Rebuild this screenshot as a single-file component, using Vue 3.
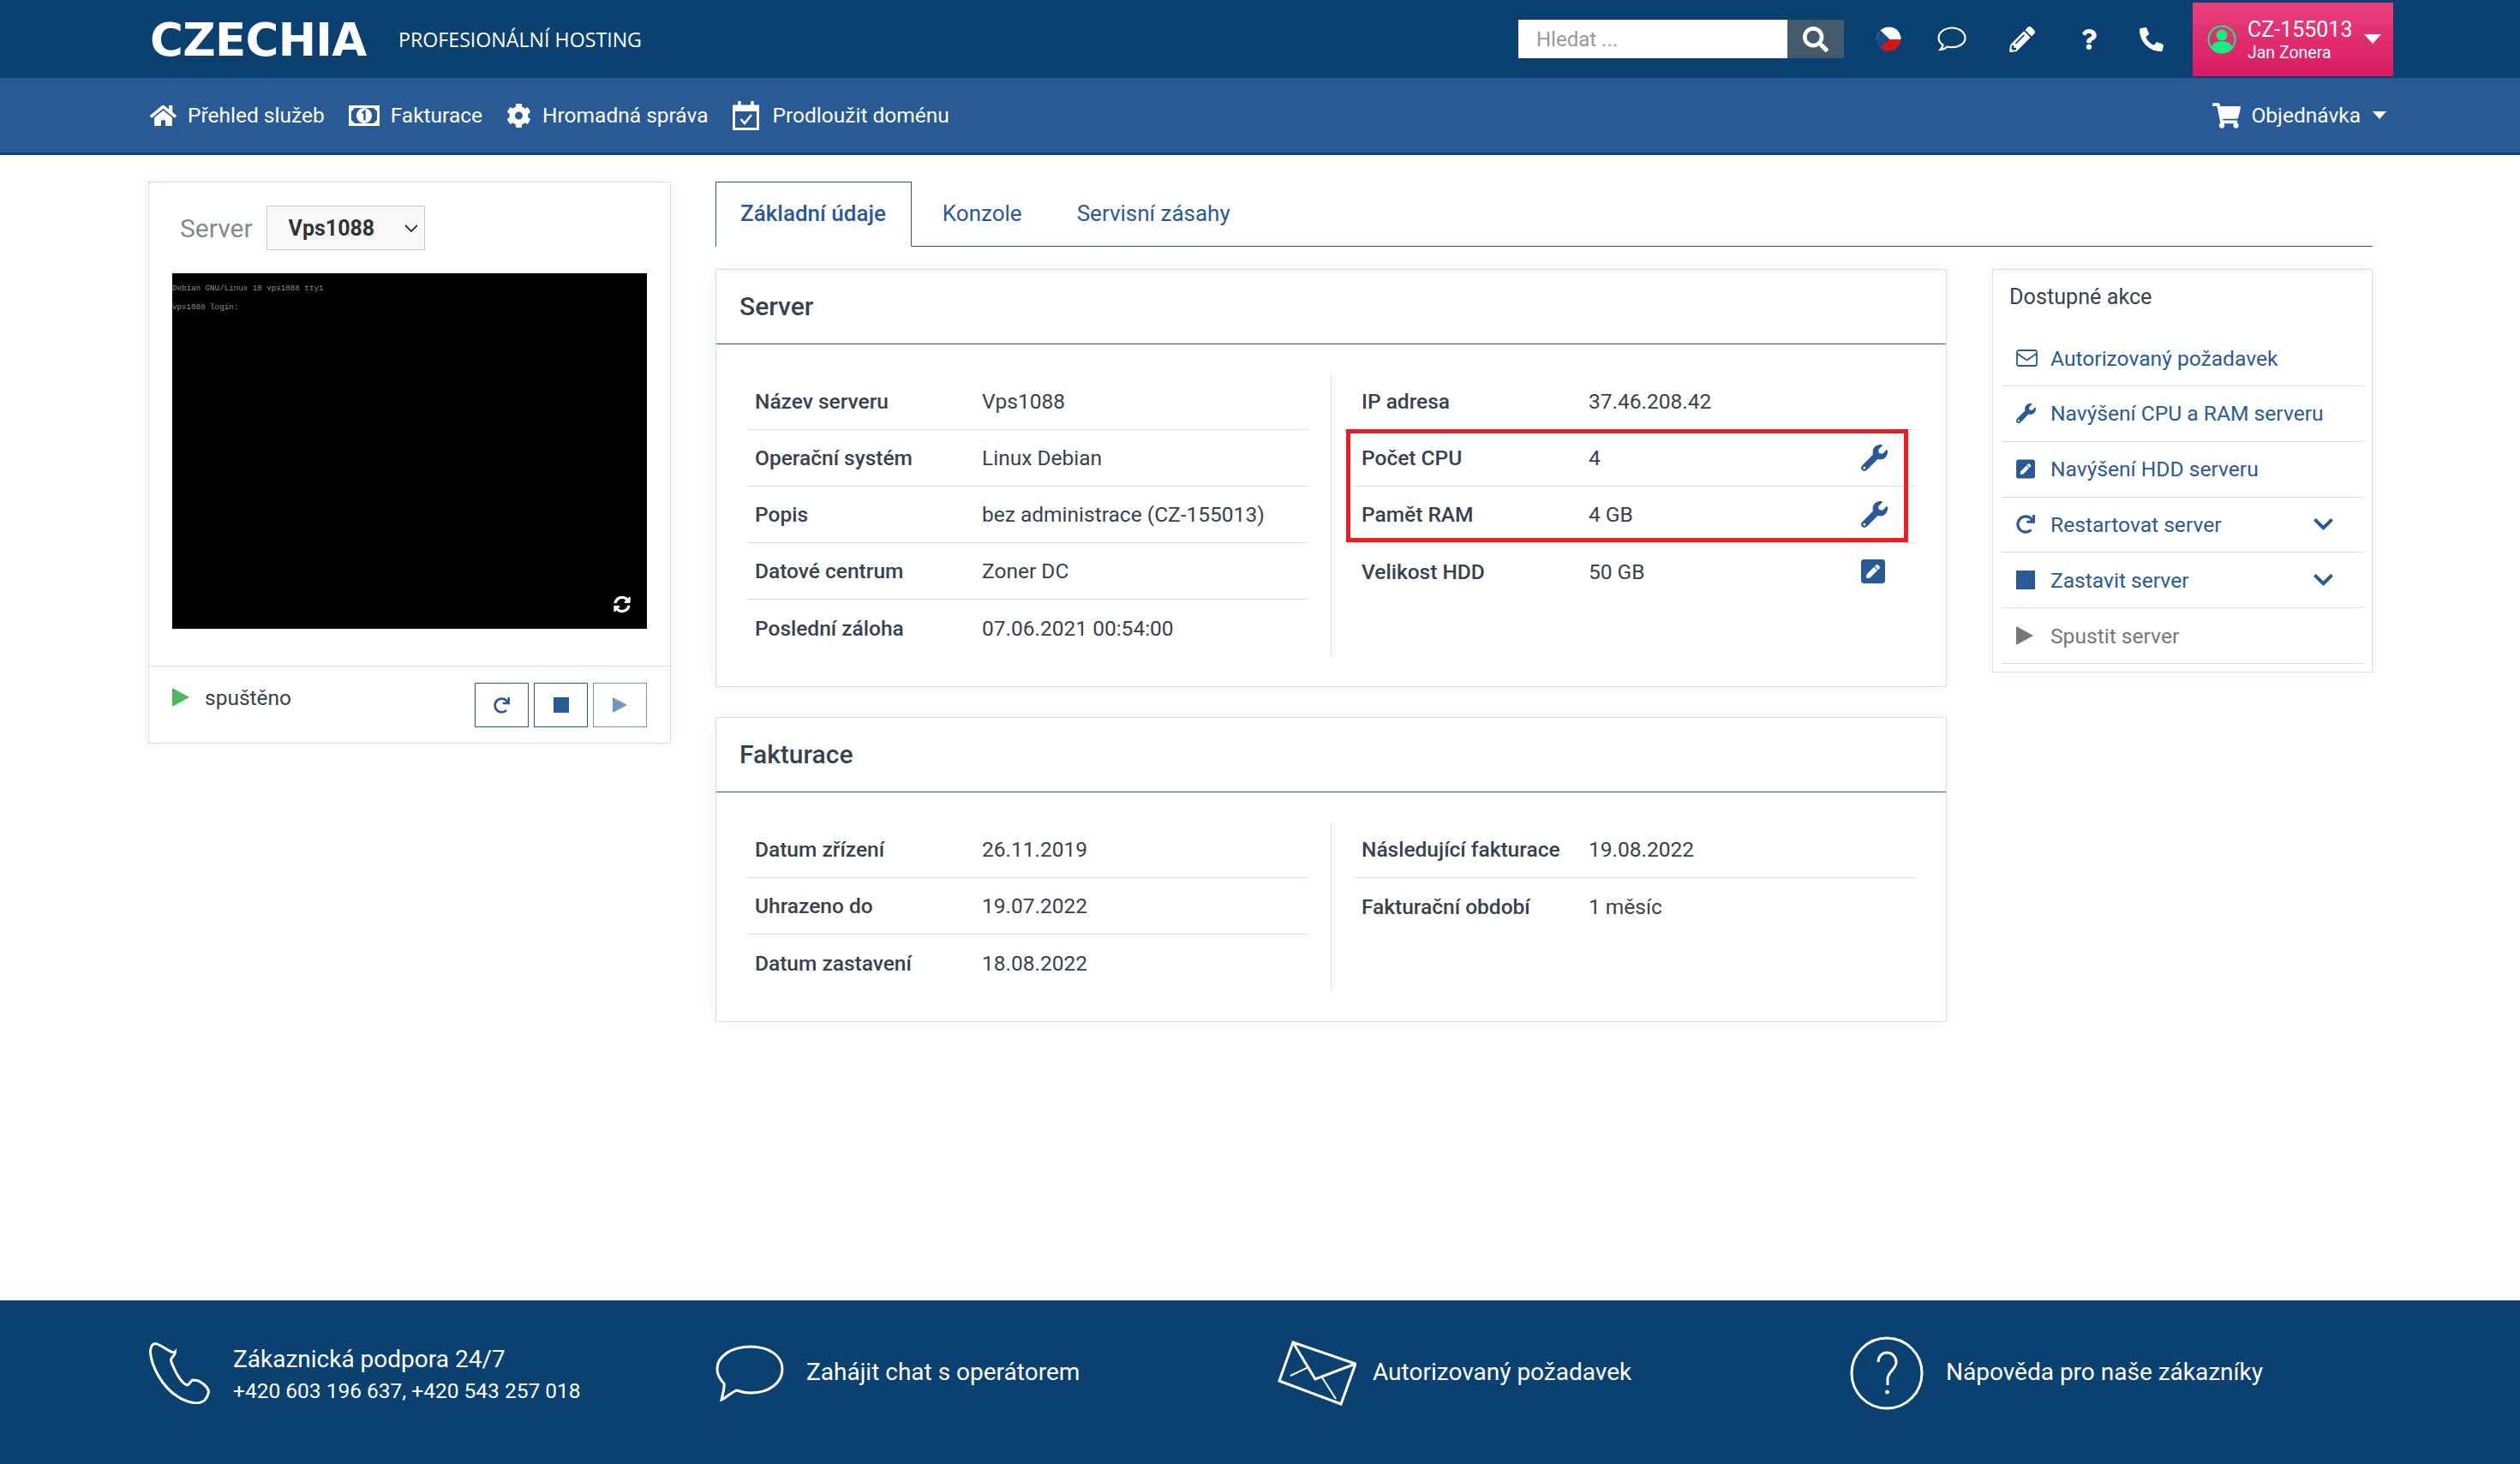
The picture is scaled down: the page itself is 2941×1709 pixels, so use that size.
<template>
  <div class="page">
    <header class="topbar">
      <div class="brand">CZECHIA</div>
      <div class="tagline">PROFESIONÁLNÍ HOSTING</div>
      <div class="search">
        <input type="text" placeholder="Hledat ..." />
        <button class="search-btn">
          <svg width="30" height="30" viewBox="0 0 512 512"><path fill="#fff" :d="icons.search" /></svg>
        </button>
      </div>
      <div class="top-icons">
        <svg class="flag" width="29" height="29" viewBox="0 0 29 29">
          <defs><clipPath id="flagclip"><circle cx="14.5" cy="14.5" r="14" /></clipPath></defs>
          <g clip-path="url(#flagclip)">
            <rect width="29" height="15" fill="#fff" />
            <rect y="15" width="29" height="14" fill="#d7141a" />
            <path d="M0 0L15 14.5L0 29Z" fill="#1c4a85" />
          </g>
        </svg>
        <svg class="t-chat" width="34" height="29" viewBox="0 0 34 29"><path fill="none" stroke="#fff" stroke-width="2.200" d="M17.500 1.500C8.800 1.500 1.500 6.500 1.500 13c0 3.500 2 6.500 5 8.500-.3 2-1.500 4-3 5.500 3 0 6-1.500 8-3.500 2 .5 4 .7 6 .7 8.700 0 15-5 15-11S26 1.500 17.500 1.500z" /></svg>
        <svg class="t-pen" width="30" height="30" viewBox="0 0 512 512"><path fill="#fff" :d="icons.pencil" /></svg>
        <svg class="t-help" width="18" height="26" viewBox="0 0 384 512"><path fill="#fff" :d="icons.question" /></svg>
        <svg class="t-phone" width="28" height="28" viewBox="0 0 512 512"><path fill="#fff" transform="translate(512 0) scale(-1 1)" :d="icons.phone" /></svg>
      </div>
      <div class="account">
        <svg class="avatar" width="34" height="34" viewBox="0 0 34 34">
          <circle cx="17" cy="17" r="15.5" fill="none" stroke="#12ef80" stroke-width="2" />
          <circle cx="17" cy="12" r="6.5" fill="#12ef80" />
          <path d="M4.500 26c2-5 7-7 12.500-7s10.500 2 12.500 7a15 15 0 0 1-25 0z" fill="#12ef80" />
        </svg>
        <div class="acc-text">
          <div class="acc-id">CZ-155013</div>
          <div class="acc-name">Jan Zonera</div>
        </div>
        <span class="caret big"></span>
      </div>
    </header>

    <nav class="navbar">
      <a class="nav-item">
        <svg width="31" height="28" viewBox="0 0 576 512"><path fill="#fff" :d="icons.home" /></svg>
        Přehled služeb
      </a>
      <a class="nav-item">
        <svg width="36" height="24" viewBox="0 0 36 24">
          <path fill-rule="evenodd" fill="#fff" d="M0 0h36v24H0zM7 3L3 7v10l4 4h22l4-4V7l-4-4z" />
          <circle cx="18" cy="12" r="9" fill="#fff" />
          <path d="M15.500 9l3-2v10.500" fill="none" stroke="#2a5a96" stroke-width="2.400" />
        </svg>
        Fakturace
      </a>
      <a class="nav-item">
        <svg width="29" height="30" viewBox="0 0 512 512"><path fill="#fff" :d="icons.cog" /></svg>
        Hromadná správa
      </a>
      <a class="nav-item cal">
        <svg width="31" height="34" viewBox="0 0 31 34">
          <path d="M1.500 6h28v26.500h-28z" fill="none" stroke="#fff" stroke-width="3" />
          <rect x="1" y="5" width="29" height="7" fill="#fff" />
          <path d="M8 1v7M23 1v7" stroke="#fff" stroke-width="3.500" stroke-linecap="round" />
          <path d="M9.500 21l4.500 5 8-10" fill="none" stroke="#fff" stroke-width="2.500" />
        </svg>
        Prodloužit doménu
      </a>
      <a class="nav-item order">
        <svg width="33" height="30" viewBox="0 0 576 512"><path fill="#fff" :d="icons.cart" /></svg>
        Objednávka
        <span class="caret"></span>
      </a>
    </nav>

    <main class="content">
      <aside class="server-box">
        <div class="server-top">
          <label class="server-label">Server</label>
          <div class="select-wrap">
            <select class="server-select"><option>Vps1088</option></select>
            <svg class="select-arrow" width="16" height="10" viewBox="0 0 16 10"><path d="M1 1l7 7 7-7" fill="none" stroke="#333" stroke-width="1.800" /></svg>
          </div>
        </div>
        <div class="screen">
          <div class="screen-line">Debian GNU/Linux 10 vps1088 tty1</div>
          <div class="screen-line second">vps1088 login:</div>
          <svg class="screen-sync" width="20" height="21" viewBox="0 0 512 512"><path fill="#fff" :d="icons.sync" /></svg>
        </div>
        <div class="server-status">
          <div class="state">
            <svg width="20" height="22" viewBox="0 0 20 22"><path d="M0 0L20 11L0 22Z" fill="#4cb85c" /></svg>
            <span>spuštěno</span>
          </div>
          <div class="controls">
            <button class="ctl">
              <svg width="19" height="19" viewBox="0 0 512 512"><path fill="#2a5a96" :d="icons.redo" /></svg>
            </button>
            <button class="ctl">
              <span class="stop"></span>
            </button>
            <button class="ctl off">
              <svg width="17" height="18" viewBox="0 0 17 18"><path d="M0 0L17 9L0 18Z" fill="#7396c0" /></svg>
            </button>
          </div>
        </div>
      </aside>

      <section class="detail">
        <div class="tabs">
          <a v-for="(t, i) in tabs" :key="t" class="tab" :class="{ active: i === 0 }">{{ t }}</a>
        </div>
        <div class="detail-body">
          <div class="cards">
            <div v-for="card in cards" :key="card.title" class="card">
              <h2 class="card-title">{{ card.title }}</h2>
              <div class="cols">
                <div v-for="(col, ci) in card.cols" :key="ci" class="col">
                  <div v-for="r in col" :key="r.label" class="row">
                    <span class="r-label">{{ r.label }}</span>
                    <span class="r-value">{{ r.value }}</span>
                    <svg v-if="r.icon === 'wrench'" class="r-icon" width="31" height="31" viewBox="0 0 512 512"><path fill="#2a5a96" :d="icons.wrench" /></svg>
                    <svg v-if="r.icon === 'edit'" class="r-icon edit" width="28" height="32" viewBox="0 0 448 512"><path fill="#2a5a96" :d="icons.edit" /></svg>
                  </div>
                  <span v-if="card.mark && ci === 1" class="mark"></span>
                </div>
              </div>
            </div>
          </div>

          <div class="actions">
            <div class="actions-title">Dostupné akce</div>
            <a v-for="a in actions" :key="a.text" class="action" :class="{ disabled: a.disabled }">
              <span class="a-icon">
                <svg v-if="a.icon === 'mail'" width="25" height="20" viewBox="0 0 25 20">
                  <rect x="1" y="1" width="23" height="18" rx="2" fill="none" stroke="#2a5a96" stroke-width="1.800" />
                  <path d="M1.500 5l11 7.500 11-7.500" fill="none" stroke="#2a5a96" stroke-width="1.800" />
                </svg>
                <svg v-else-if="a.icon === 'wrench'" width="23" height="23" viewBox="0 0 512 512"><path fill="#2a5a96" :d="icons.wrench" /></svg>
                <svg v-else-if="a.icon === 'edit'" width="22" height="25" viewBox="0 0 448 512"><path fill="#2a5a96" :d="icons.edit" /></svg>
                <svg v-else-if="a.icon === 'redo'" width="22" height="22" viewBox="0 0 512 512"><path fill="#2a5a96" :d="icons.redo" /></svg>
                <span v-else-if="a.icon === 'stop'" class="a-stop"></span>
                <svg v-else width="20" height="22" viewBox="0 0 20 22"><path d="M0 0L20 11L0 22Z" fill="#777" /></svg>
              </span>
              <span>{{ a.text }}</span>
              <svg v-if="a.more" class="chev" width="23" height="26" viewBox="0 0 448 512"><path fill="#2a5a96" :d="icons.chevron" /></svg>
            </a>
          </div>
        </div>
      </section>
    </main>

    <footer class="footer">
      <div class="f-item f-phone">
        <svg width="71" height="72" viewBox="0 0 71 72" fill="none" stroke="#fff" stroke-width="3">
          <path d="M7 1.500C3 2 1.500 7 1.500 12 3 28 15 52 33 63c8 6 20 9 26 7.500 5-1 9-6 10.500-12.500 0-4-5-9-10-12-3-2-6-2-9-2-3 2-3 5-6 6-6-2-12-12-15-19-2-4-4-8-4-11 2-4 5-5 5-9C27 15 13 1 7 1.500z" />
        </svg>
        <div class="f-text">
          <div>Zákaznická podpora 24/7</div>
          <div class="f-sub">+420 603 196 637, +420 543 257 018</div>
        </div>
      </div>
      <div class="f-item f-chat">
        <svg width="80" height="66" viewBox="0 0 80 66" fill="none" stroke="#fff" stroke-width="3">
          <path d="M41 2C19 2 2 13 2 28c0 8 4 13 8 17 1 5-2 14-3 19 5-2 15-11 18-11 5 2 11 3 16 3 22 0 37-12 37-28C78 13 63 2 41 2z" />
        </svg>
        <div class="f-text">Zahájit chat s operátorem</div>
      </div>
      <div class="f-item f-mail">
        <svg width="92" height="76" viewBox="0 0 92 76" fill="none" stroke="#fff" stroke-width="3">
          <path d="M18 2L91 27 74 74 2 47z" />
          <path d="M18 2l26 43 47-18" />
          <path d="M36 31L15 41M52 43l16 25" stroke-width="2" />
        </svg>
        <div class="f-text">Autorizovaný požadavek</div>
      </div>
      <div class="f-item f-help">
        <svg width="86" height="86" viewBox="0 0 86 86" fill="none" stroke="#fff" stroke-width="3">
          <circle cx="43" cy="43" r="41" />
          <path d="M33 30c0-7 5-11 10.500-11S54 24 54 30c0 8-9 11-10 19v8" />
          <circle cx="43.500" cy="65" r="2" fill="#fff" stroke-width="1" />
        </svg>
        <div class="f-text">Nápověda pro naše zákazníky</div>
      </div>
    </footer>
  </div>
</template>

<script setup>
const icons = {
  search: 'M505 442.7L405.3 343c-4.5-4.5-10.6-7-17-7H372c27.6-35.3 44-79.7 44-128C416 93.1 322.9 0 208 0S0 93.1 0 208s93.1 208 208 208c48.3 0 92.7-16.4 128-44v16.3c0 6.4 2.5 12.5 7 17l99.7 99.7c9.4 9.4 24.6 9.4 33.9 0l28.3-28.3c9.4-9.4 9.4-24.6.1-34zM208 336c-70.7 0-128-57.2-128-128 0-70.7 57.2-128 128-128 70.7 0 128 57.2 128 128 0 70.7-57.2 128-128 128z',
  pencil: 'M497.9 142.1l-46.1 46.1c-4.7 4.7-12.3 4.7-17 0l-111-111c-4.7-4.7-4.7-12.3 0-17l46.1-46.1c18.7-18.7 49.1-18.7 67.9 0l60.1 60.1c18.8 18.7 18.8 49.1 0 67.9zM284.2 99.8L21.6 362.4.4 483.9c-2.9 16.4 11.4 30.6 27.8 27.8l121.5-21.3 262.6-262.6c4.7-4.7 4.7-12.3 0-17l-111-111c-4.8-4.7-12.4-4.7-17.1 0zM124.1 339.9c-5.5-5.5-5.5-14.3 0-19.8l154-154c5.5-5.5 14.3-5.5 19.8 0s5.5 14.3 0 19.8l-154 154c-5.5 5.5-14.3 5.5-19.8 0zM88 424h48v36.3l-64.5 11.3-31.1-31.1L51.7 376H88v48z',
  question: 'M202.021 0C122.202 0 70.503 32.703 29.914 91.026c-7.363 10.58-5.093 25.086 5.178 32.874l43.138 32.709c10.373 7.865 25.132 6.026 33.253-4.148 25.049-31.381 43.63-49.449 82.757-49.449 30.764 0 68.816 19.799 68.816 49.631 0 22.552-18.617 34.134-48.993 51.164-35.423 19.86-82.299 44.576-82.299 106.405V320c0 13.255 10.745 24 24 24h72.471c13.255 0 24-10.745 24-24v-5.773c0-42.86 125.268-44.645 125.268-160.627C377.504 66.256 286.902 0 202.021 0zM192 373.459c-38.196 0-69.271 31.075-69.271 69.271 0 38.195 31.075 69.27 69.271 69.27s69.271-31.075 69.271-69.271-31.075-69.27-69.271-69.27z',
  phone: 'M493.4 24.6l-104-24c-11.3-2.6-22.9 3.3-27.5 13.9l-48 112c-4.2 9.8-1.4 21.3 6.9 28l60.6 49.6c-36 76.7-98.9 140.5-177.2 177.2l-49.6-60.6c-6.8-8.3-18.2-11.1-28-6.9l-112 48C3.9 366.5-2 378.1.6 389.4l24 104C27.1 504.2 36.7 512 48 512c256.1 0 464-207.5 464-464 0-11.2-7.7-20.9-18.6-23.4z',
  home: 'M280.37 148.26L96 300.11V464a16 16 0 0 0 16 16l112.06-.29a16 16 0 0 0 15.92-16V368a16 16 0 0 1 16-16h64a16 16 0 0 1 16 16v95.64a16 16 0 0 0 16 16.05L464 480a16 16 0 0 0 16-16V300L295.67 148.26a12.19 12.19 0 0 0-15.3 0zM571.6 251.47L488 182.56V44.05a12 12 0 0 0-12-12h-56a12 12 0 0 0-12 12v72.61L318.47 43a48 48 0 0 0-61 0L4.34 251.47a12 12 0 0 0-1.6 16.9l25.5 31A12 12 0 0 0 45.15 301l235.22-193.74a12.19 12.19 0 0 1 15.3 0L530.9 301a12 12 0 0 0 16.9-1.6l25.5-31a12 12 0 0 0-1.7-16.93z',
  cog: 'M487.4 315.7l-42.6-24.6c4.3-23.2 4.3-47 0-70.2l42.6-24.6c4.9-2.8 7.1-8.6 5.5-14-11.1-35.6-30-67.8-54.7-94.6-3.8-4.1-10-5.1-14.8-2.3L380.8 110c-17.9-15.4-38.5-27.3-60.8-35.1V25.8c0-5.6-3.9-10.5-9.4-11.7-36.7-8.2-74.3-7.8-109.2 0-5.5 1.2-9.4 6.1-9.4 11.7V75c-22.2 7.9-42.8 19.8-60.8 35.1L88.7 85.5c-4.9-2.8-11-1.9-14.8 2.3-24.7 26.7-43.6 58.9-54.7 94.6-1.7 5.4.6 11.2 5.5 14L67.3 221c-4.3 23.2-4.3 47 0 70.2l-42.6 24.6c-4.9 2.8-7.1 8.6-5.5 14 11.1 35.6 30 67.8 54.7 94.6 3.8 4.1 10 5.1 14.8 2.3l42.6-24.6c17.9 15.4 38.5 27.3 60.8 35.1v49.2c0 5.6 3.9 10.5 9.4 11.7 36.7 8.2 74.3 7.8 109.2 0 5.5-1.2 9.4-6.1 9.4-11.7v-49.2c22.2-7.9 42.8-19.8 60.8-35.1l42.6 24.6c4.9 2.8 11 1.9 14.8-2.3 24.7-26.7 43.6-58.9 54.7-94.6 1.500-5.500-.7-11.300-5.600-14.100zM256 336c-44.100 0-80-35.900-80-80s35.900-80 80-80 80 35.900 80 80-35.900 80-80 80z',
  cart: 'M528.12 301.319l47.273-208C578.806 78.301 567.391 64 551.99 64H159.208l-9.166-44.81C147.758 8.021 137.93 0 126.529 0H24C10.745 0 0 10.745 0 24v16c0 13.255 10.745 24 24 24h69.883l70.248 343.435C147.325 417.1 136 435.222 136 456c0 30.928 25.072 56 56 56s56-25.072 56-56c0-15.674-6.447-29.835-16.824-40h209.647C430.447 426.165 424 440.326 424 456c0 30.928 25.072 56 56 56s56-25.072 56-56c0-22.172-12.888-41.332-31.579-50.405l5.517-24.276c3.413-15.018-8.002-29.319-23.403-29.319H218.117l-6.545-32h293.145c11.206 0 20.92-7.754 23.403-18.681z',
  sync: 'M370.72 133.28C339.458 104.008 298.888 87.962 255.848 88c-77.458.068-144.328 53.178-162.791 126.85-1.344 5.363-6.122 9.15-11.651 9.15H24.103c-7.498 0-13.194-6.807-11.807-14.176C33.933 94.924 134.813 8 256 8c66.448 0 126.791 26.136 171.315 68.685L463.03 40.97C478.149 25.851 504 36.559 504 57.941V192c0 13.255-10.745 24-24 24H345.941c-21.382 0-32.09-25.851-16.971-40.971l41.75-41.749zM32 296h134.059c21.382 0 32.09 25.851 16.971 40.971l-41.75 41.75c31.262 29.273 71.835 45.319 114.876 45.28 77.418-.07 144.315-53.144 162.787-126.849 1.344-5.363 6.122-9.15 11.651-9.15h57.304c7.498 0 13.194 6.807 11.807 14.176C478.067 417.076 377.187 504 256 504c-66.448 0-126.791-26.136-171.315-68.685L48.97 471.03C33.851 486.149 8 475.441 8 454.059V320c0-13.255 10.745-24 24-24z',
  redo: 'M500.33 0h-47.41a12 12 0 0 0-12 12.57l4 82.76A247.42 247.42 0 0 0 256 8C119.34 8 7.9 119.53 8 256.19 8.1 393.07 119.1 504 256 504a247.1 247.1 0 0 0 166.18-63.91 12 12 0 0 0 .48-17.43l-34-34a12 12 0 0 0-16.38-.55A176 176 0 1 1 402.1 157.8l-101.53-4.87a12 12 0 0 0-12.57 12v47.41a12 12 0 0 0 12 12h200.33a12 12 0 0 0 12-12V12a12 12 0 0 0-12-12z',
  chevron: 'M207.029 381.476L12.686 187.132c-9.373-9.373-9.373-24.569 0-33.941l22.667-22.667c9.357-9.357 24.522-9.375 33.901-.04L224 284.505l154.745-154.021c9.379-9.335 24.544-9.317 33.901.04l22.667 22.667c9.373 9.373 9.373 24.569 0 33.941L240.971 381.476c-9.373 9.372-24.569 9.372-33.942 0z',
  wrench: 'M507.73 109.1c-2.24-9.03-13.54-12.09-20.12-5.51l-74.36 74.36-67.88-11.31-11.31-67.88 74.36-74.36c6.62-6.62 3.43-17.9-5.66-20.16-47.38-11.74-99.55.91-136.58 37.93-39.64 39.64-50.55 97.1-34.05 147.2L18.74 402.76c-24.99 24.99-24.99 65.51 0 90.5 24.99 24.99 65.51 24.99 90.5 0l213.21-213.21c50.12 16.71 107.47 5.68 147.37-34.22 37.07-37.07 49.7-89.32 37.91-136.73zM64 472c-13.25 0-24-10.75-24-24 0-13.26 10.75-24 24-24s24 10.74 24 24c0 13.25-10.75 24-24 24z',
  edit: 'M400 480H48c-26.5 0-48-21.5-48-48V80c0-26.5 21.5-48 48-48h352c26.5 0 48 21.5 48 48v352c0 26.5-21.5 48-48 48zM238.1 177.9L102.4 313.6l-6.3 57.1c-.8 7.6 5.6 14.1 13.3 13.3l57.1-6.3L302.2 242c2.3-2.3 2.3-6.1 0-8.5L246.7 178c-2.5-2.4-6.3-2.4-8.6-.1zM345 165.1L314.9 135c-9.4-9.4-24.6-9.4-33.9 0l-23.1 23.1c-2.3 2.3-2.3 6.1 0 8.5l55.5 55.5c2.3 2.3 6.1 2.3 8.5 0L345 199c9.3-9.3 9.3-24.5 0-33.9z'
}

const tabs = ['Základní údaje', 'Konzole', 'Servisní zásahy']

const cards = [
  {
    title: 'Server',
    mark: true,
    cols: [
      [
        { label: 'Název serveru', value: 'Vps1088' },
        { label: 'Operační systém', value: 'Linux Debian' },
        { label: 'Popis', value: 'bez administrace (CZ-155013)' },
        { label: 'Datové centrum', value: 'Zoner DC' },
        { label: 'Poslední záloha', value: '07.06.2021 00:54:00' }
      ],
      [
        { label: 'IP adresa', value: '37.46.208.42' },
        { label: 'Počet CPU', value: '4', icon: 'wrench' },
        { label: 'Pamět RAM', value: '4 GB', icon: 'wrench' },
        { label: 'Velikost HDD', value: '50 GB', icon: 'edit' }
      ]
    ]
  },
  {
    title: 'Fakturace',
    cols: [
      [
        { label: 'Datum zřízení', value: '26.11.2019' },
        { label: 'Uhrazeno do', value: '19.07.2022' },
        { label: 'Datum zastavení', value: '18.08.2022' }
      ],
      [
        { label: 'Následující fakturace', value: '19.08.2022' },
        { label: 'Fakturační období', value: '1 měsíc' }
      ]
    ]
  }
]

const actions = [
  { icon: 'mail', text: 'Autorizovaný požadavek' },
  { icon: 'wrench', text: 'Navýšení CPU a RAM serveru' },
  { icon: 'edit', text: 'Navýšení HDD serveru' },
  { icon: 'redo', text: 'Restartovat server', more: true },
  { icon: 'stop', text: 'Zastavit server', more: true },
  { icon: 'play', text: 'Spustit server', disabled: true }
]
</script>

<style>
html, body {
  margin: 0;
  background: #fff;
}
</style>

<style scoped>
.page {
  min-height: 100vh;
  display: flex;
  flex-direction: column;
  font-family: Roboto, "Noto Sans", sans-serif;
  font-size: 24.5px;
  color: #36424f;
  box-sizing: border-box;
}

/* top bar */
.topbar {
  height: 91px;
  background: #0a4170;
  display: flex;
  align-items: center;
  padding: 0 148px 0 175px;
  color: #fff;
  flex-shrink: 0;
}
.brand {
  font-family: "DejaVu Sans", sans-serif;
  font-weight: 700;
  font-size: 53px;
  letter-spacing: -0.700px;
  width: 290px;
  padding-top: 2px;
}
.tagline {
  font-family: "Open Sans", sans-serif;
  font-size: 23.200px;
}
.search {
  margin-left: auto;
  display: flex;
  height: 45px;
}
.search input {
  width: 314px;
  height: 45px;
  border: 0;
  padding: 0 21px;
  box-sizing: border-box;
  font: 24px Roboto, sans-serif;
  outline: none;
}
.search input::placeholder {
  color: #999;
}
.search-btn {
  width: 66px;
  height: 45px;
  border: 0;
  padding: 0;
  background: #44596a;
  display: flex;
  align-items: center;
  justify-content: center;
}
.top-icons {
  display: flex;
  align-items: center;
  margin: 0 0 0 38px;
}
.t-chat { margin-left: 42px; }
.t-pen { margin-left: 50px; }
.t-help { margin-left: 54px; }
.t-phone { margin-left: 50px; }
.account {
  height: 86px;
  width: 234px;
  margin-left: 34px;
  background: linear-gradient(#ea3f7c, #d81b60);
  display: flex;
  align-items: center;
  padding-left: 17px;
  box-sizing: border-box;
}
.acc-text {
  margin-left: 13px;
}
.acc-id {
  font-size: 25px;
  line-height: 30px;
  margin-top: 2px;
}
.acc-name {
  font-size: 19.500px;
  font-weight: 400;
  line-height: 24px;
}
.caret {
  display: inline-block;
  border-left: 8px solid transparent;
  border-right: 8px solid transparent;
  border-top: 9px solid #fff;
  margin-left: 2px;
}
.caret.big {
  border-left-width: 10px;
  border-right-width: 10px;
  border-top-width: 11px;
  margin-left: 14px;
}

/* nav */
.navbar {
  height: 90px;
  box-sizing: border-box;
  background: #2a5a96;
  border-bottom: 3px solid #0a4170;
  display: flex;
  align-items: center;
  padding: 0 156px 0 175px;
  flex-shrink: 0;
}
.nav-item {
  display: flex;
  align-items: center;
  gap: 13px;
  color: #fff;
  font-size: 24.500px;
  margin-right: 28px;
}
.nav-item.cal {
  gap: 16px;
}
.nav-item.order {
  margin-left: auto;
  margin-right: 0;
  gap: 12px;
}

/* content */
.content {
  flex: 1;
  display: flex;
  align-items: flex-start;
  gap: 52px;
  padding: 31px 172px 0 173px;
}
.server-box {
  width: 610px;
  flex-shrink: 0;
  box-sizing: border-box;
  border: 1px solid #ddd;
  background: #fff;
  box-shadow: 0 0 18px rgba(0, 0, 0, 0.05);
}
.server-top {
  display: flex;
  align-items: center;
  padding: 27px 0 0 36px;
}
.server-label {
  font-size: 30px;
  color: #7f8a94;
  margin-right: 16px;
}
.select-wrap {
  position: relative;
}
.server-select {
  appearance: none;
  width: 185px;
  height: 52px;
  box-sizing: border-box;
  border: 1px solid #ccc;
  background: #f8f8f8;
  padding: 0 0 0 25px;
  font: 700 25px Roboto, sans-serif;
  color: #333;
  outline: none;
}
.select-arrow {
  position: absolute;
  right: 8px;
  top: 22px;
}
.screen {
  position: relative;
  height: 415px;
  margin: 27px 27px 0;
  background: #000;
  color: #8f8f8f;
  font-family: "Liberation Mono", monospace;
  font-size: 9.200px;
}
.screen-line {
  position: absolute;
  left: 0;
  top: 12px;
  white-space: pre;
}
.screen-line.second {
  top: 34px;
}
.screen-sync {
  position: absolute;
  right: 19px;
  bottom: 18px;
}
.server-status {
  margin-top: 43px;
  border-top: 1px solid #ddd;
  height: 90px;
  display: flex;
  justify-content: space-between;
  padding: 19px 27px 0;
  box-sizing: border-box;
}
.state {
  display: flex;
  align-items: flex-start;
  gap: 18px;
  font-size: 24.500px;
  line-height: 36px;
}
.state svg {
  margin-top: 6px;
}
.controls {
  display: flex;
  gap: 6px;
}
.ctl {
  width: 63px;
  height: 52px;
  padding: 0;
  background: #fff;
  border: 1px solid #2a5a96;
  display: flex;
  align-items: center;
  justify-content: center;
}
.ctl.off {
  border-color: #7396c0;
}
.stop {
  width: 18px;
  height: 18px;
  background: #2a5a96;
}

.detail {
  flex: 1;
  min-width: 0;
}
.tabs {
  display: flex;
  height: 76px;
  box-sizing: border-box;
  border-bottom: 1px solid #2a5a96;
}
.tab {
  display: flex;
  align-items: center;
  height: 76px;
  box-sizing: border-box;
  padding: 0 28px 2px;
  color: #2a5a96;
  font-size: 26px;
  margin-right: 8px;
}
.tab.active {
  font-weight: 500;
  padding-right: 29px;
  border: 1px solid #2a5a96;
  border-bottom: 1px solid #fff;
}
.detail-body {
  display: flex;
  align-items: flex-start;
  gap: 53px;
  margin-top: 26px;
}
.cards {
  width: 1437px;
  flex-shrink: 0;
  display: flex;
  flex-direction: column;
  gap: 35px;
}
.card {
  border: 1px solid #ddd;
  box-shadow: 0 0 18px rgba(0, 0, 0, 0.05);
  background: #fff;
  padding-bottom: 35px;
}
.card-title {
  margin: 0;
  height: 86px;
  line-height: 85px;
  padding-left: 27px;
  font-size: 30px;
  font-weight: 500;
  color: #36424f;
  border-bottom: 1px solid #2a5a96;
  box-sizing: content-box;
}
.cols {
  display: flex;
  padding: 34px 36px 0;
}
.col {
  position: relative;
  width: 655px;
  flex-shrink: 0;
  box-sizing: content-box;
}
.col:first-child {
  padding-right: 26px;
  border-right: 1px solid #ddd;
}
.col:last-child {
  padding-left: 26px;
}
.row {
  display: flex;
  align-items: center;
  height: 66px;
  box-sizing: border-box;
  border-bottom: 1px solid #ddd;
  padding-left: 9px;
}
.row:last-of-type {
  border-bottom: 0;
}
.r-label {
  width: 265px;
  font-weight: 500;
  flex-shrink: 0;
}
.r-value {
  color: #36424f;
}
.r-icon {
  margin-left: auto;
  margin-right: 32px;
}
.r-icon.edit {
  margin-right: 35px;
}
.mark {
  position: absolute;
  left: 17px;
  top: 65px;
  width: 656px;
  height: 132px;
  border: 5px solid #ed1c24;
  box-sizing: border-box;
  pointer-events: none;
}

/* actions */
.actions {
  flex: 1;
  border: 1px solid #ddd;
  box-shadow: 0 0 18px rgba(0, 0, 0, 0.05);
  background: #fff;
  padding: 0 9px 9px;
}
.actions-title {
  height: 71.200px;
  line-height: 64px;
  padding-left: 10px;
  font-size: 25.200px;
}
.action {
  display: flex;
  align-items: center;
  height: 64.800px;
  box-sizing: border-box;
  border-bottom: 1px solid #ddd;
  color: #2a5a96;
  font-size: 24.600px;
}
.action.disabled {
  color: #777;
}
.a-icon {
  width: 58px;
  padding-left: 18px;
  box-sizing: border-box;
  display: flex;
  align-items: center;
  flex-shrink: 0;
}
.a-stop {
  width: 22px;
  height: 22px;
  background: #2a5a96;
}
.chev {
  margin-left: auto;
  margin-right: 36px;
}

/* footer */
.footer {
  height: 191px;
  background: #0a4170;
  color: #fff;
  display: grid;
  grid-template-columns: 661px 656px 668px 1fr;
  padding-left: 174px;
  padding-top: 42px;
  box-sizing: border-box;
  flex-shrink: 0;
}
.f-item {
  display: flex;
  align-items: center;
  height: 86px;
}
.f-text {
  font-size: 28px;
  line-height: 37px;
  margin-bottom: 4px;
}
.f-phone .f-text {
  margin-left: 27px;
  margin-bottom: 0;
  margin-top: 4px;
}
.f-chat .f-text { margin-left: 26px; }
.f-mail .f-text { margin-left: 19px; }
.f-help .f-text { margin-left: 26px; }
.f-sub {
  font-size: 24.500px;
}
</style>
